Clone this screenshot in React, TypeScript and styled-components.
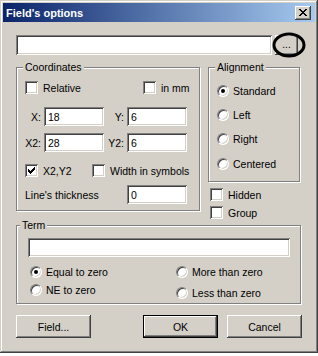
import React from 'react';
import styled, { createGlobalStyle } from 'styled-components';

const Global = createGlobalStyle`
  html, body { margin: 0; padding: 0; background: #ffffff; }
  body {
    font-family: "Liberation Sans", Arial, sans-serif;
    font-size: 10.5px;
    color: #000;
  }
  * { box-sizing: border-box; }
`;

const sunken = `
  box-shadow: inset 1px 1px #808080, inset -1px -1px #ffffff,
    inset 2px 2px #404040, inset -2px -2px #d4d0c8;
`;
const raised = `
  box-shadow: inset -1px -1px #404040, inset 1px 1px #ffffff,
    inset -2px -2px #808080, inset 2px 2px #d4d0c8;
`;

const Window = styled.div`
  width: 318px;
  height: 353px;
  padding: 3px;
  background: #d4d0c8;
  box-shadow: inset -1px -1px #404040, inset 1px 1px #d4d0c8,
    inset -2px -2px #808080, inset 2px 2px #ffffff;
  display: flex;
  flex-direction: column;
`;

const TitleBar = styled.div`
  height: 19px;
  display: flex;
  align-items: center;
  justify-content: space-between;
  padding: 0 4px 0 3px;
  background: linear-gradient(to right, #0a246a, #a6caf0);
  color: #ffffff;
  font-weight: bold;
  font-size: 11px;
`;

const CloseButton = styled.div`
  width: 16px;
  height: 14px;
  background: #d4d0c8;
  ${raised}
  display: flex;
  align-items: center;
  justify-content: center;
`;

const Body = styled.div`
  padding: 13px 14px 0 13px;
  display: flex;
  flex-direction: column;
`;

const PathRow = styled.div`
  position: relative;
  display: flex;
  gap: 3px;
`;

const Edit = styled.input<{ $w: number; $h?: number }>`
  width: ${(p) => p.$w}px;
  height: ${(p) => p.$h ?? 19}px;
  border: none;
  outline: none;
  margin: 0;
  padding: 1px 0 0 4px;
  background: #ffffff;
  font: inherit;
  color: #000;
  ${sunken}
`;

const BrowseButton = styled.div`
  width: 23px;
  height: 20px;
  background: #d4d0c8;
  ${raised}
  display: flex;
  align-items: center;
  justify-content: center;
  font-size: 10px;
  padding-bottom: 1px;
`;

const Annotation = styled.svg`
  position: absolute;
  left: 257px;
  top: -2px;
  width: 32px;
  height: 24px;
  overflow: visible;
`;

const Middle = styled.div`
  display: flex;
  align-items: flex-start;
  gap: 8px;
  margin-top: 12px;
`;

const Group = styled.div<{ $w: number; $pad: string }>`
  position: relative;
  width: ${(p) => p.$w}px;
  padding: ${(p) => p.$pad};
  border: 1px solid #808080;
  box-shadow: 1px 1px 0 #ffffff, inset 1px 1px 0 #ffffff;
  display: flex;
  flex-direction: column;
`;

const GroupTitle = styled.span<{ $left: number }>`
  position: absolute;
  top: -7px;
  left: ${(p) => p.$left}px;
  padding: 0 2px;
  line-height: 13px;
  background: #d4d0c8;
  white-space: nowrap;
`;

const Row = styled.div<{ $mt?: number; $pl?: number }>`
  display: flex;
  align-items: center;
  margin-top: ${(p) => p.$mt ?? 0}px;
  padding-left: ${(p) => p.$pl ?? 0}px;
`;

const CoordGrid = styled.div<{ $mt: number }>`
  display: grid;
  grid-template-columns: 16px 60px 17px 60px;
  column-gap: 3px;
  align-items: center;
  margin-top: ${(p) => p.$mt}px;
`;

const FieldLabel = styled.span<{ $w?: number }>`
  display: flex;
  justify-content: flex-end;
  white-space: nowrap;
  ${(p) => (p.$w ? `width: ${p.$w}px; justify-content: flex-start;` : '')}
`;

const CheckItem = styled.label<{ $w?: number }>`
  display: flex;
  align-items: center;
  gap: 5px;
  height: 13px;
  white-space: nowrap;
  ${(p) => (p.$w ? `width: ${p.$w}px;` : '')}
`;

const CheckBox = styled.span`
  width: 13px;
  height: 13px;
  flex: none;
  background: #ffffff;
  ${sunken}
  display: block;
`;

const RadioItem = styled.label<{ $w?: number }>`
  display: flex;
  align-items: center;
  gap: 4px;
  height: 13px;
  white-space: nowrap;
  ${(p) => (p.$w ? `width: ${p.$w}px;` : '')}
`;

const RadioCircle = styled.span`
  width: 12px;
  height: 12px;
  flex: none;
  border-radius: 50%;
  background: #ffffff;
  border: 1px solid;
  border-color: #808080 #ffffff #ffffff #808080;
  box-shadow: inset 1px 1px 0 #404040, inset -1px -1px 0 #d4d0c8;
  display: flex;
  align-items: center;
  justify-content: center;
`;

const RadioDot = styled.span`
  width: 4px;
  height: 4px;
  border-radius: 50%;
  background: #000;
`;

const RightColumn = styled.div`
  display: flex;
  flex-direction: column;
  width: 92px;
`;

const RadioList = styled.div<{ $gap: number }>`
  display: flex;
  flex-direction: column;
  gap: ${(p) => p.$gap}px;
`;

const TermGroup = styled(Group)`
  margin-top: 6px;
`;

const TermOptions = styled.div`
  display: flex;
  margin: 8px 0 0 2px;
`;

const ButtonRow = styled.div`
  display: flex;
  margin-top: 11px;
`;

const PushButton = styled.div<{ $default?: boolean; $ml?: number }>`
  width: 75px;
  height: 23px;
  flex: none;
  margin-left: ${(p) => p.$ml ?? 0}px;
  background: #d4d0c8;
  display: flex;
  align-items: center;
  justify-content: center;
  ${(p) =>
    p.$default
      ? `border: 1px solid #000;
         box-shadow: inset -1px -1px #404040, inset 1px 1px #ffffff,
           inset -2px -2px #808080, inset 2px 2px #d4d0c8;`
      : raised}
`;

const CloseGlyph = () => (
  <svg width="8" height="7" viewBox="0 0 8 7" shapeRendering="crispEdges">
    <path
      d="M0 0h2v1h-2z M6 0h2v1h-2z M1 1h2v1h-2z M5 1h2v1h-2z M2 2h4v1h-4z M3 3h2v1h-2z M2 4h4v1h-4z M1 5h2v1h-2z M5 5h2v1h-2z M0 6h2v1h-2z M6 6h2v1h-2z"
      fill="#000"
    />
  </svg>
);

const CheckMark = () => (
  <svg width="13" height="13" viewBox="0 0 13 13" shapeRendering="crispEdges">
    <path
      d="M9 3h1v1h-1z M8 4h2v1h-2z M3 5h1v1h-1z M7 5h3v1h-3z M3 6h2v1h-2z M6 6h3v1h-3z M3 7h5v1h-5z M4 8h3v1h-3z M5 9h1v1h-1z"
      fill="#000"
    />
  </svg>
);

const Check = ({ label, checked, w }: { label: string; checked?: boolean; w?: number }) => (
  <CheckItem $w={w}>
    <CheckBox>{checked && <CheckMark />}</CheckBox>
    <span>{label}</span>
  </CheckItem>
);

const Radio = ({ label, checked, w }: { label: string; checked?: boolean; w?: number }) => (
  <RadioItem $w={w}>
    <RadioCircle>{checked && <RadioDot />}</RadioCircle>
    <span>{label}</span>
  </RadioItem>
);

export default function App() {
  return (
    <>
      <Global />
      <Window>
        <TitleBar>
          <span>Field's options</span>
          <CloseButton>
            <CloseGlyph />
          </CloseButton>
        </TitleBar>
        <Body>
          <PathRow>
            <Edit $w={256} $h={20} readOnly defaultValue="" />
            <BrowseButton>...</BrowseButton>
            <Annotation viewBox="0 0 32 24">
              <ellipse cx="16" cy="12" rx="15" ry="11" fill="none" stroke="#000" strokeWidth="3" />
            </Annotation>
          </PathRow>

          <Middle>
            <Group $w={184} $pad="13px 0 6px 8px">
              <GroupTitle $left={6}>Coordinates</GroupTitle>
              <Row>
                <Check label="Relative" w={118} />
                <Check label="in mm" />
              </Row>
              <CoordGrid $mt={13}>
                <FieldLabel>X:</FieldLabel>
                <Edit $w={60} readOnly defaultValue="18" />
                <FieldLabel>Y:</FieldLabel>
                <Edit $w={60} readOnly defaultValue="6" />
              </CoordGrid>
              <CoordGrid $mt={7}>
                <FieldLabel>X2:</FieldLabel>
                <Edit $w={60} readOnly defaultValue="28" />
                <FieldLabel>Y2:</FieldLabel>
                <Edit $w={60} readOnly defaultValue="6" />
              </CoordGrid>
              <Row $mt={12}>
                <Check label="X2,Y2" checked w={67} />
                <Check label="Width in symbols" />
              </Row>
              <Row $mt={8}>
                <FieldLabel $w={102}>Line's thickness</FieldLabel>
                <Edit $w={60} readOnly defaultValue="0" />
              </Row>
            </Group>

            <RightColumn>
              <Group $w={92} $pad="16px 0 11px 8px">
                <GroupTitle $left={6}>Alignment</GroupTitle>
                <RadioList $gap={11}>
                  <Radio label="Standard" checked />
                  <Radio label="Left" />
                  <Radio label="Right" />
                </RadioList>
                <Row $mt={12}>
                  <Radio label="Centered" />
                </Row>
              </Group>
              <Row $mt={6} $pl={2}>
                <Check label="Hidden" />
              </Row>
              <Row $mt={5} $pl={2}>
                <Check label="Group" />
              </Row>
            </RightColumn>
          </Middle>

          <TermGroup $w={285} $pad="12px 0 4px 11px">
            <GroupTitle $left={3}>Term</GroupTitle>
            <Edit $w={262} readOnly defaultValue="" />
            <TermOptions>
              <RadioList $gap={5}>
                <Radio label="Equal to zero" checked w={146} />
                <Radio label="NE to zero" w={146} />
              </RadioList>
              <RadioList $gap={8}>
                <Radio label="More than zero" />
                <Radio label="Less than zero" />
              </RadioList>
            </TermOptions>
          </TermGroup>

          <ButtonRow>
            <PushButton>Field...</PushButton>
            <PushButton $default $ml={52}>OK</PushButton>
            <PushButton $ml={9}>Cancel</PushButton>
          </ButtonRow>
        </Body>
      </Window>
    </>
  );
}
